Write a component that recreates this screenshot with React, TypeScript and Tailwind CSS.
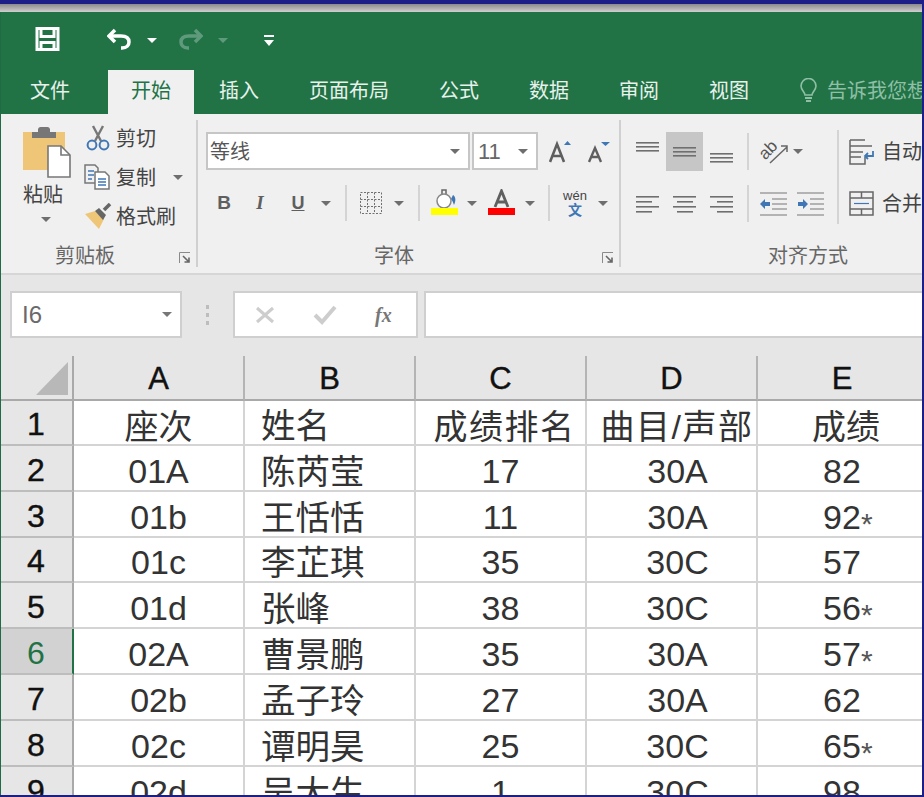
import React from 'react';

const tabs = ['文件', '开始', '插入', '页面布局', '公式', '数据', '审阅', '视图'];

const rows = [
  ['座次', '姓名', '成绩排名', '曲目/声部', '成绩', ''],
  ['01A', '陈芮莹', '17', '30A', '82', ''],
  ['01b', '王恬恬', '11', '30A', '92', '*'],
  ['01c', '李芷琪', '35', '30C', '57', ''],
  ['01d', '张峰', '38', '30C', '56', '*'],
  ['02A', '曹景鹏', '35', '30A', '57', '*'],
  ['02b', '孟子玲', '27', '30A', '62', ''],
  ['02c', '谭明昊', '25', '30C', '65', '*'],
  ['02d', '吴大生', '1', '30C', '98', ''],
];

function Caret({ color = '#6e6e6e' }: { color?: string }) {
  return (
    <svg width="10" height="5" viewBox="0 0 10 5" className="shrink-0">
      <path d="M0 0h10L5 5z" fill={color} />
    </svg>
  );
}

function Launcher() {
  return (
    <svg width="12" height="12" viewBox="0 0 12 12" className="shrink-0">
      <path d="M0.5 11V0.5H11" fill="none" stroke="#8a8a8a" />
      <path d="M4 4l6 6M10 5.5V10H5.5" fill="none" stroke="#666" strokeWidth="1.6" />
    </svg>
  );
}

function VLine({ h }: { h: string }) {
  return <div className={`w-[2px] shrink-0 bg-[#d4d4d4] ${h}`} />;
}

function Lines({ rows, x, w, color = '#6f6f6f' }: { rows: number[]; x: number[]; w: number[]; color?: string }) {
  return (
    <svg width="25" height="20" viewBox="0 0 25 20">
      {rows.map((r, i) => (
        <rect key={i} x={x[i]} y={r} width={w[i]} height="1.6" fill={color} />
      ))}
    </svg>
  );
}

function App() {
  return (
    <div className="w-[924px] h-[797px] overflow-hidden flex flex-col bg-[#f0f0f0] border-r-2 border-b-2 border-[#1c1f87] [font-family:'Liberation_Sans','Noto_Sans_CJK_SC',sans-serif]">
      <div className="h-[4px] shrink-0 bg-[#1c1f87]" />
      <div className="h-[8px] shrink-0 bg-gradient-to-b from-[#8b8b8b] to-[#d0d0d0]" />

      <div className="flex-1 min-h-0 flex flex-col border-l border-[#1f6b45]">
        {/* title bar */}
        <div className="h-[58px] shrink-0 bg-[#217346] flex items-center">
          <svg width="25" height="24" viewBox="0 0 25 24" className="ml-[34px] mt-[-4px]">
            <path d="M2 1.500h21v21H2z M6 1.500v8h13v-8 M6 22.500v-7h13v7" fill="none" stroke="#fff" strokeWidth="3" />
          </svg>
          <svg width="25" height="24" viewBox="0 0 25 24" className="ml-[47px] mt-[-4px]">
            <path d="M8 3L2 9l6 6" fill="none" stroke="#fff" strokeWidth="3.500" />
            <path d="M3 9h11c6 0 8 3 8 6s-2 6-7 6h-1" fill="none" stroke="#fff" strokeWidth="3.500" />
          </svg>
          <div className="ml-[15px] mt-[-2px]"><Caret color="#ffffff" /></div>
          <svg width="25" height="24" viewBox="0 0 25 24" className="ml-[21px] mt-[-4px]">
            <path d="M17 3l6 6-6 6" fill="none" stroke="#5f9a7c" strokeWidth="3.500" />
            <path d="M22 9H11c-6 0-8 3-8 6s2 6 7 6h1" fill="none" stroke="#5f9a7c" strokeWidth="3.500" />
          </svg>
          <div className="ml-[15px] mt-[-2px]"><Caret color="#5f9a7c" /></div>
          <svg width="10" height="11" viewBox="0 0 10 11" className="ml-[36px] mt-[-2px]">
            <path d="M0 0h10v2H0z M0 5h10L5 11z" fill="#fff" />
          </svg>
        </div>

        {/* tabs */}
        <div className="h-[44px] shrink-0 bg-[#217346] flex items-center text-[20px] text-[#e8f1ec] whitespace-nowrap overflow-hidden">
          <span className="ml-[29px] shrink-0 pb-[3px]">{tabs[0]}</span>
          <div className="ml-[38px] w-[86px] shrink-0 h-full bg-[#f0f0f0] text-[#217346] flex items-center justify-center pb-[3px]">{tabs[1]}</div>
          <span className="ml-[25px] shrink-0 pb-[3px]">{tabs[2]}</span>
          <span className="ml-[50px] shrink-0 pb-[3px]">{tabs[3]}</span>
          <span className="ml-[50px] shrink-0 pb-[3px]">{tabs[4]}</span>
          <span className="ml-[50px] shrink-0 pb-[3px]">{tabs[5]}</span>
          <span className="ml-[50px] shrink-0 pb-[3px]">{tabs[6]}</span>
          <span className="ml-[50px] shrink-0 pb-[3px]">{tabs[7]}</span>
          <svg width="17" height="25" viewBox="0 0 17 25" className="ml-[51px] shrink-0 mb-[3px]">
            <path d="M5 17c0-3-4-5-4-9a7.500 7.500 0 0 1 15 0c0 4-4 6-4 9z" fill="none" stroke="#8fbfa5" strokeWidth="1.600" />
            <path d="M5 20h7M6 23h5" stroke="#8fbfa5" strokeWidth="2" />
          </svg>
          <span className="ml-[10px] shrink-0 text-[#8fbfa5] pb-[3px]">告诉我您想要做什么</span>
        </div>

        {/* ribbon */}
        <div className="h-[161px] shrink-0 bg-[#f0f0f0] border-b-2 border-[#d6d6d6] py-[6px] flex text-[#444]">
          {/* clipboard */}
          <div className="w-[197px] shrink-0 flex flex-col border-r-2 border-[#d0d0d0]">
            <div className="h-[123px] flex">
              <div className="ml-[22px] w-[61px] flex flex-col">
                <svg width="48" height="51" viewBox="0 0 48 51" className="mt-[7px]">
                  <path d="M0 5h42v38H0z" fill="#efc578" />
                  <path d="M9 5h6V2a3 3 0 0 1 3-2h6a3 3 0 0 1 3 2v3h6v6H9z" fill="#777" />
                  <path d="M25 19h13l9 9v22H25z" fill="#fff" stroke="#777" strokeWidth="1.600" />
                  <path d="M38 19v9h9" fill="none" stroke="#777" strokeWidth="1.600" />
                </svg>
                <span className="mt-[5px] text-[20px] leading-[24px]">粘贴</span>
                <div className="mt-[10px] ml-[18px]"><Caret /></div>
              </div>
              <div className="flex flex-col gap-[3px] text-[20px]">
                <div className="h-[36px] flex items-center">
                  <svg width="24" height="26" viewBox="0 0 24 26" className="ml-[2px] mr-[6px]">
                    <path d="M7 1l8 15M17 1L9 16" stroke="#777" strokeWidth="2.400" fill="none" />
                    <circle cx="6" cy="20" r="4.400" fill="none" stroke="#3f77b5" strokeWidth="2" />
                    <circle cx="18" cy="20" r="4.400" fill="none" stroke="#3f77b5" strokeWidth="2" />
                  </svg>
                  <span className="pt-[2px]">剪切</span>
                </div>
                <div className="h-[36px] flex items-center">
                  <svg width="26" height="26" viewBox="0 0 26 26" className="mr-[6px]">
                    <path d="M1 1h10l3 3v15H1z" fill="#f0f0f0" stroke="#777" strokeWidth="1.500" />
                    <path d="M4 7h6M4 11h6M4 15h4" stroke="#3f77b5" strokeWidth="1.500" />
                    <path d="M11 8h10l4 4v13H11z" fill="#fff" stroke="#777" strokeWidth="1.500" />
                    <path d="M14 15h8M14 18h8M14 21h8" stroke="#3f77b5" strokeWidth="1.500" />
                  </svg>
                  <span className="pt-[2px]">复制</span>
                  <div className="ml-[17px]"><Caret /></div>
                </div>
                <div className="h-[36px] flex items-center">
                  <svg width="28" height="26" viewBox="0 0 28 26" className="mr-[4px]">
                    <path d="M1 11l10-3 9 8-5 10z" fill="#efc578" />
                    <path d="M11 8l4-3 7 7-3 5z" fill="#666" />
                    <path d="M20 7l6-6" stroke="#666" strokeWidth="3.500" />
                  </svg>
                  <span className="pt-[2px]">格式刷</span>
                </div>
              </div>
            </div>
            <div className="h-[24px] flex items-center text-[20px] text-[#666] pl-[54px] pr-[5px]">
              <span className="pt-[1px]">剪贴板</span>
              <div className="ml-auto mt-[5px]"><Launcher /></div>
            </div>
          </div>

          {/* font */}
          <div className="w-[423px] shrink-0 flex flex-col border-r-2 border-[#d0d0d0]">
            <div className="h-[123px] flex flex-col">
              <div className="mt-[12px] ml-[8px] h-[38px] flex items-center">
                <div className="w-[264px] h-full bg-white border-2 border-[#c6c6c6] flex items-center pl-[2px] pr-[8px] text-[20px] text-[#555]">
                  <span className="pt-[2px]">等线</span>
                  <div className="ml-auto"><Caret /></div>
                </div>
                <div className="ml-[2px] w-[66px] h-full bg-white border-2 border-[#c6c6c6] flex items-center pl-[4px] pr-[8px] text-[22px] text-[#666]">
                  <span>11</span>
                  <div className="ml-auto"><Caret /></div>
                </div>
                <svg width="22" height="24" viewBox="0 0 22 24" className="ml-[11px] mt-[2px]">
                  <path d="M1 22L8 4l7 18M4 16h8" fill="none" stroke="#5f5f5f" strokeWidth="2.600" />
                  <path d="M15 5l3.500-4L22 5z" fill="#3f77b5" />
                </svg>
                <svg width="22" height="22" viewBox="0 0 22 22" className="ml-[17px] mt-[3px]">
                  <path d="M1 20L7 6l6 14M3.500 15h7" fill="none" stroke="#5f5f5f" strokeWidth="2.400" />
                  <path d="M13 0h9l-4.500 4z" fill="#3f77b5" />
                </svg>
              </div>
              <div className="mt-[13px] ml-[8px] h-[40px] flex items-center text-[#5f5f5f]">
                <span className="w-[36px] text-center font-bold text-[19px]">B</span>
                <span className="w-[36px] text-center italic font-bold text-[19px] [font-family:'Liberation_Serif',serif]">I</span>
                <span className="w-[40px] text-center underline font-bold text-[18px]">U</span>
                <div className="ml-[3px]"><Caret /></div>
                <div className="ml-[14px]"><VLine h="h-[36px]" /></div>
                <svg width="22" height="22" viewBox="0 0 22 22" className="ml-[13px]">
                  <path d="M.5.5h21v21H.5zM.5 7.500h21M.5 14.500h21M7.500.5v21M14.500.5v21" fill="none" stroke="#6f6f6f" strokeDasharray="2 1.500" />
                </svg>
                <div className="ml-[12px]"><Caret /></div>
                <div className="ml-[14px]"><VLine h="h-[36px]" /></div>
                <svg width="27" height="26" viewBox="0 0 27 26" className="ml-[11px] mt-[-2px]">
                  <path d="M11 1h4v8h-4z" fill="none" stroke="#666" strokeWidth="1.500" />
                  <circle cx="13" cy="12" r="7" fill="#fff" stroke="#888" strokeWidth="1.500" />
                  <path d="M22 6c3 2 3 6 1 10-1-3-2-5-3-6z" fill="#3f77b5" />
                  <rect x="0" y="19" width="27" height="7" fill="#ffff00" />
                </svg>
                <div className="ml-[9px]"><Caret /></div>
                <svg width="27" height="26" viewBox="0 0 27 26" className="ml-[11px] mt-[-2px]">
                  <path d="M7 18L13.500 2 20 18M9.500 13h8" fill="none" stroke="#5f5f5f" strokeWidth="2.800" />
                  <rect x="0" y="19" width="27" height="7" fill="#ff0000" />
                </svg>
                <div className="ml-[10px]"><Caret /></div>
                <div className="ml-[13px]"><VLine h="h-[36px]" /></div>
                <div className="ml-[12px] w-[26px] flex flex-col items-center">
                  <span className="text-[13px] leading-[14px] text-[#444]">wén</span>
                  <span className="text-[14px] leading-[14px] font-bold text-[#3f77b5]">文</span>
                </div>
                <div className="ml-[10px]"><Caret /></div>
              </div>
            </div>
            <div className="h-[24px] flex items-center text-[20px] text-[#666] pl-[176px] pr-[5px]">
              <span className="pt-[1px]">字体</span>
              <div className="ml-auto mt-[5px]"><Launcher /></div>
            </div>
          </div>

          {/* alignment */}
          <div className="flex-1 min-w-0 flex flex-col overflow-hidden">
            <div className="h-[123px] flex">
              <div className="w-[216px] shrink-0 flex flex-col">
                <div className="mt-[12px] ml-[8px] h-[39px] flex items-center">
                  <div className="w-[37px] h-full flex items-center justify-center mt-[-1px]">
                    <Lines rows={[1, 5, 9]} x={[1, 1, 1]} w={[23, 23, 23]} />
                  </div>
                  <div className="w-[37px] h-full bg-[#c6c6c6] flex items-center justify-center">
                    <Lines rows={[5, 9, 13]} x={[1, 1, 1]} w={[23, 23, 23]} />
                  </div>
                  <div className="w-[37px] h-full flex items-center justify-center mt-[12px]">
                    <Lines rows={[5, 9, 13]} x={[1, 1, 1]} w={[23, 23, 23]} />
                  </div>
                  <div className="ml-[7px]"><VLine h="h-[37px]" /></div>
                  <svg width="29" height="24" viewBox="0 0 29 24" className="ml-[11px]">
                    <path d="M10 23L27 7M21 6h6v6" fill="none" stroke="#666" strokeWidth="1.500" />
                    <text x="0" y="16" fontSize="17" fill="#555" transform="rotate(-45 8 12)">ab</text>
                  </svg>
                  <div className="ml-[4px]"><Caret /></div>
                </div>
                <div className="mt-[13px] ml-[8px] h-[39px] flex items-center">
                  <div className="w-[37px] flex justify-center"><Lines rows={[2, 7, 12, 17]} x={[1, 1, 1, 1]} w={[23, 16, 23, 16]} /></div>
                  <div className="w-[37px] flex justify-center"><Lines rows={[2, 7, 12, 17]} x={[1, 5, 1, 5]} w={[23, 16, 23, 16]} /></div>
                  <div className="w-[37px] flex justify-center"><Lines rows={[2, 7, 12, 17]} x={[1, 8, 1, 8]} w={[23, 16, 23, 16]} /></div>
                  <div className="ml-[7px]"><VLine h="h-[37px]" /></div>
                  <svg width="27" height="24" viewBox="0 0 27 24" className="ml-[11px]">
                    <path d="M0 1h27M12 7h15M12 12h15M12 17h15M0 23h27" stroke="#777" strokeWidth="1.200" />
                    <path d="M0 12l5-5v3h5v4H5v3z" fill="#3f77b5" />
                  </svg>
                  <svg width="27" height="24" viewBox="0 0 27 24" className="ml-[10px]">
                    <path d="M0 1h27M13 7h14M13 12h14M13 17h14M0 23h27" stroke="#777" strokeWidth="1.200" />
                    <path d="M11 12L6 7v3H1v4h5v3z" fill="#3f77b5" />
                  </svg>
                </div>
              </div>
              <div className="mt-[10px]"><VLine h="h-[94px]" /></div>
              <div className="flex flex-col text-[20px] ml-[10px] whitespace-nowrap">
                <div className="mt-[12px] h-[39px] flex items-center">
                  <svg width="25" height="26" viewBox="0 0 25 26" className="shrink-0 mr-[8px]">
                    <path d="M1 1h15M1 7h22" stroke="#666" strokeWidth="1.500" />
                    <path d="M1 1v24h15V18M1 13h13M1 18h11" fill="none" stroke="#666" strokeWidth="1.500" />
                    <path d="M24 12v5h-8M19 14l-3 3 3 3" fill="none" stroke="#3f77b5" strokeWidth="1.800" />
                  </svg>
                  <span>自动换行</span>
                </div>
                <div className="mt-[13px] h-[39px] flex items-center">
                  <svg width="25" height="25" viewBox="0 0 25 25" className="shrink-0 mr-[8px]">
                    <path d="M1 1h23v23H1zM1 7h23M1 18h23M12.500 1v6M12.500 18v6" fill="none" stroke="#666" strokeWidth="1.500" />
                    <path d="M5 12.500h15" stroke="#3f77b5" strokeWidth="1.200" />
                  </svg>
                  <span>合并后居中</span>
                </div>
              </div>
            </div>
            <div className="h-[24px] flex items-center text-[20px] text-[#666] pl-[147px] pt-[1px]">对齐方式</div>
          </div>
        </div>

        {/* formula bar */}
        <div className="h-[81px] shrink-0 bg-[#e6e6e6] flex items-start pt-[16px]">
          <div className="ml-[9px] w-[172px] h-[47px] bg-white border-2 border-[#cfcfcf] flex items-center pl-[10px] pr-[8px] text-[24px] text-[#6a6a6a]">
            <span>I6</span>
            <div className="ml-auto"><Caret color="#777" /></div>
          </div>
          <div className="ml-[24px] mt-[14px] w-[3px] flex flex-col gap-[4px]">
            <div className="h-[4px] bg-[#bdbdbd]" />
            <div className="h-[4px] bg-[#bdbdbd]" />
            <div className="h-[4px] bg-[#bdbdbd]" />
          </div>
          <div className="ml-[24px] w-[185px] h-[47px] bg-white border-2 border-[#cfcfcf] flex items-center">
            <svg width="20" height="18" viewBox="0 0 20 18" className="ml-[20px]">
              <path d="M2 2l16 14M18 2L2 16" stroke="#cdcdcd" strokeWidth="3" />
            </svg>
            <svg width="24" height="20" viewBox="0 0 24 20" className="ml-[38px]">
              <path d="M2 10l7 7L22 2" fill="none" stroke="#cdcdcd" strokeWidth="4" />
            </svg>
            <span className="ml-[38px] italic font-bold text-[20px] text-[#777] [font-family:'Liberation_Serif',serif]">fx</span>
          </div>
          <div className="ml-[6px] flex-1 h-[47px] bg-white border-2 border-r-0 border-[#cfcfcf]" />
        </div>

        {/* sheet */}
        <div className="flex-1 min-h-0 overflow-hidden bg-white">
          <div className="grid grid-cols-[73px_171px_171px_171px_171px_164px] grid-rows-[45px_45px_46px_46px_45px_46px_46px_46px_46px_46px]">
            <div className="bg-[#e6e6e6] border-r-2 border-b-2 border-[#a9a9a9] flex items-end justify-end pr-[4px] pb-[4px]">
              <svg width="32" height="33" viewBox="0 0 32 33"><path d="M32 0v33H0z" fill="#b8b8b8" /></svg>
            </div>
            {['A', 'B', 'C', 'D', 'E'].map((c) => (
              <div key={c} className={c === 'E'
                ? 'bg-[#e6e6e6] border-b-2 border-b-[#a9a9a9] flex items-center justify-center text-[31px] text-[#111] pt-[3px] pl-[4px] [-webkit-text-stroke:0.4px_#111]'
                : 'bg-[#e6e6e6] border-r-2 border-r-[#b4b4b4] border-b-2 border-b-[#a9a9a9] flex items-center justify-center text-[31px] text-[#111] pt-[3px] [-webkit-text-stroke:0.4px_#111]'}>
                {c}
              </div>
            ))}
            {rows.map((r, i) => {
              const selected = i === 5;
              return (
                <React.Fragment key={i}>
                  <div className={selected
                    ? 'bg-[#d2d2d2] border-r-2 border-r-[#217346] border-b-2 border-b-[#bdbdbd] flex items-center justify-center text-[32px] text-[#217346] pr-[1px] pt-[3px]'
                    : 'bg-[#e6e6e6] border-r-2 border-r-[#a9a9a9] border-b-2 border-b-[#bdbdbd] flex items-center justify-center text-[32px] text-[#111] pr-[1px] pt-[3px] [-webkit-text-stroke:0.4px_#111]'}>
                    {i + 1}
                  </div>
                  <div className={i === 0
                    ? 'border-r-2 border-b-2 border-[#d4d4d4] flex items-center justify-center text-[34px] text-[#333] pt-[9px]'
                    : 'border-r-2 border-b-2 border-[#d4d4d4] flex items-center justify-center text-[34px] text-[#333] pt-[6px]'}>{r[0]}</div>
                  <div className="border-r-2 border-b-2 border-[#d4d4d4] flex items-center pl-[16px] text-[34.5px] text-[#333] pt-[9px] whitespace-nowrap">{r[1]}</div>
                  <div className={i === 0
                    ? 'border-r-2 border-b-2 border-[#d4d4d4] flex items-center justify-center pl-[8px] text-[34px] text-[#333] pt-[9px] whitespace-nowrap tracking-[1.5px]'
                    : 'border-r-2 border-b-2 border-[#d4d4d4] flex items-center justify-center text-[34px] text-[#333] pt-[6px]'}>{r[2]}</div>
                  <div className={i === 0
                    ? 'border-r-2 border-b-2 border-[#d4d4d4] flex items-center justify-center pl-[11px] text-[34px] text-[#333] pt-[9px] whitespace-nowrap tracking-[1.500px]'
                    : 'border-r-2 border-b-2 border-[#d4d4d4] flex items-center justify-center pl-[12px] text-[34px] text-[#333] pt-[6px] whitespace-nowrap'}>{r[3]}</div>
                  <div className={i === 0
                    ? 'border-b-2 border-[#d4d4d4] flex items-center justify-center text-[34px] text-[#333] pt-[9px] pl-[12px]'
                    : 'border-b-2 border-[#d4d4d4] flex items-center justify-center text-[34px] text-[#333] pt-[6px] pl-[4px]'}>
                    <span className="relative">
                      {r[4]}
                      {r[5] && <span className="absolute left-full top-[9px] text-[30px] text-[#555]">{r[5]}</span>}
                    </span>
                  </div>
                </React.Fragment>
              );
            })}
          </div>
        </div>
      </div>
    </div>
  );
}

export default App;
